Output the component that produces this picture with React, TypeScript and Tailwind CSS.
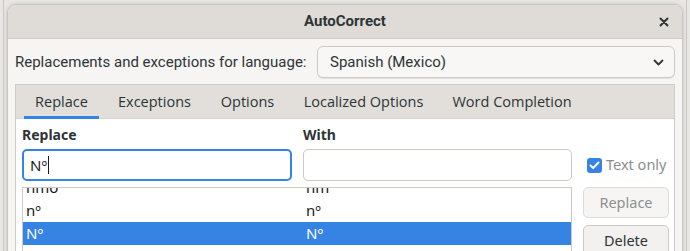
import React from "react";

const font = { fontFamily: '"Noto Sans", "Open Sans", sans-serif' };
const roboto = { fontFamily: 'Roboto, "Noto Sans", sans-serif' };
const openSans = { fontFamily: '"Open Sans", "Noto Sans", sans-serif' };

export default function App() {
  return (
    <div className="w-[690px] h-[251px] overflow-hidden bg-[#e9e7e4] relative" style={font}>
      <div className="absolute left-[3px] top-0 bottom-0 w-px bg-[#c9c6c2]" />
      <div className="absolute right-[3px] top-0 bottom-0 w-px bg-[#c9c6c2]" />
      <div className="ml-[7px] mt-[4px] w-[676px] h-[260px] rounded-t-[9px] border border-[#c8c5c1] bg-[#f6f5f4] overflow-hidden shadow-[0_0_4px_rgba(0,0,0,0.15)]">
        <div className="relative h-[34px] bg-[#dfdcd8] border-b border-[#d0cdc9] flex items-center justify-center">
          <span className="text-[15px] font-bold text-[#2e3436]" style={roboto}>AutoCorrect</span>
          <svg className="absolute right-[13px] top-[12px]" width="10" height="10" viewBox="0 0 10 10">
            <path d="M1.5 1.5 L8.5 8.5 M8.5 1.5 L1.5 8.5" stroke="#2e3436" strokeWidth="2" strokeLinecap="round" />
          </svg>
        </div>
        <div className="px-[7px]">
          <div className="mt-[7px] flex items-center h-[32px]" style={roboto}>
            <span className="w-[302px] text-[15px] text-[#2e3436]">Replacements and exceptions for language:</span>
            <div className="flex-1 h-[32px] rounded-[6px] border border-[#cdc9c5] bg-[#f8f7f6] shadow-[0_1px_1px_rgba(0,0,0,0.08)] flex items-center justify-between pl-[12px] pr-[10px]">
              <span className="text-[15px] text-[#2e3436]">Spanish (Mexico)</span>
              <svg width="11" height="7" viewBox="0 0 11 7">
                <path d="M1.5 1.5 L5.5 5.5 L9.5 1.5" stroke="#2e3436" strokeWidth="1.8" fill="none" strokeLinecap="round" strokeLinejoin="round" />
              </svg>
            </div>
          </div>
          <div className="mt-[6px] w-[660px] h-[200px] border border-[#cfccc8] bg-white">
            <div className="h-[34px] bg-[#e2dfdb] border-b border-[#d6d3cf] flex items-stretch pl-[8px] text-[14.5px] text-[#2e3436] whitespace-nowrap" style={openSans}>
              <div className="relative w-[75px] flex items-center justify-center">
                <span>Replace</span>
                <div className="absolute left-0 right-0 bottom-[-1px] h-[3px] bg-[#3584e4]" />
              </div>
              <div className="ml-[8px] w-[95px] flex items-center justify-center">Exceptions</div>
              <div className="ml-[9px] w-[73px] flex items-center justify-center">Options</div>
              <div className="ml-[9px] w-[141px] flex items-center justify-center">Localized Options</div>
              <div className="ml-[9px] w-[138px] flex items-center justify-center">Word Completion</div>
            </div>
            <div className="pl-[6px] pt-[5px] flex">
              <div className="w-[550px]">
                <div className="flex text-[14px] font-bold text-[#2e3436] h-[20px] items-center">
                  <span className="w-[281px]">Replace</span>
                  <span>With</span>
                </div>
                <div className="mt-[5px] flex">
                  <div className="w-[270px] h-[32px] rounded-[5px] border-2 border-[#3584e4] flex items-center pl-[6px] text-[15px] text-[#1a1a1a]">
                    <span>Nº</span>
                    <span className="w-px h-[18px] bg-[#1a1a1a] ml-[1px]" />
                  </div>
                  <div className="ml-[11px] w-[269px] h-[32px] rounded-[5px] border border-[#cdc9c5] bg-white" />
                </div>
                <div className="mt-[6px] w-[550px] h-[80px] border border-[#cdc9c5] overflow-hidden text-[15px] text-[#1a1a1a] leading-[23px]">
                  <div className="flex h-[23px] -mt-[12px]">
                    <span className="w-[283px] pl-[3px]">nmo</span>
                    <span>nm</span>
                  </div>
                  <div className="flex h-[23px]">
                    <span className="w-[283px] pl-[3px]">nº</span>
                    <span>nº</span>
                  </div>
                  <div className="flex h-[23px] bg-[#3584e4] text-white">
                    <span className="w-[283px] pl-[3px]">Nº</span>
                    <span>Nº</span>
                  </div>
                </div>
              </div>
              <div className="ml-[11px] w-[86px]">
                <div className="mt-[25px] flex items-center h-[32px] text-[14.5px] text-[#8b8e8f]">
                  <div className="ml-[4px] w-[15px] h-[15px] rounded-[3px] bg-[#3584e4] flex items-center justify-center">
                    <svg width="11" height="9" viewBox="0 0 11 9">
                      <path d="M1.5 4.5 L4.2 7 L9.5 1.5" stroke="white" strokeWidth="2" fill="none" strokeLinecap="round" strokeLinejoin="round" />
                    </svg>
                  </div>
                  <span className="ml-[4px]">Text only</span>
                </div>
                <div className="mt-[6px] h-[31px] rounded-[5px] border border-[#dedbd7] bg-[#f6f5f4] flex items-center justify-center text-[14.5px] text-[#8d9091]">Replace</div>
                <div className="mt-[7px] h-[31px] rounded-[5px] border border-[#cdc9c5] bg-[#f2f1f0] flex items-center justify-center text-[14.5px] text-[#2e3436] shadow-[0_1px_1px_rgba(0,0,0,0.08)]">Delete</div>
              </div>
            </div>
          </div>
        </div>
      </div>
    </div>
  );
}
